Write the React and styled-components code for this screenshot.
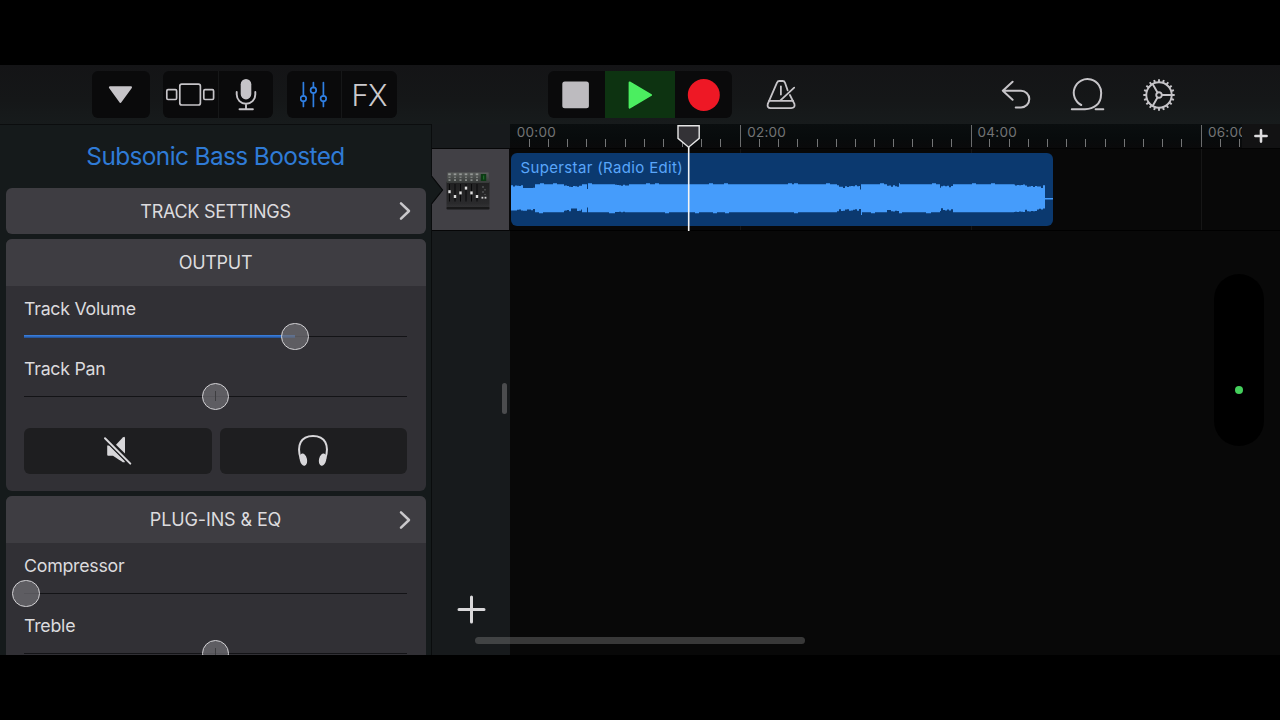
import styled, { createGlobalStyle } from 'styled-components';

const GlobalStyle = createGlobalStyle`
  * { box-sizing: border-box; }
  body {
    margin: 0;
    background: #000;
    font-family: Inter, "Liberation Sans", sans-serif;
    color: #dcdbde;
    overflow: hidden;
  }
  svg { display: block; }
`;

const Screen = styled.div`
  position: relative;
  width: 1280px;
  height: 720px;
  padding: 65px 0;
  display: flex;
  flex-direction: column;
  background: #000;
`;

/* ---------- toolbar ---------- */

const Toolbar = styled.header`
  flex: none;
  height: 59px;
  padding: 6.4px 0 0 92px;
  display: flex;
  align-items: flex-start;
  background: linear-gradient(#141416, #151718 60%, #171b1c);
`;
const Group = styled.div`
  flex: none;
  display: flex;
  height: 47px;
  margin-left: ${(p) => p.$gap || 0}px;
  border-radius: 6px;
  overflow: hidden;
  background: ${(p) => (p.$plain ? 'transparent' : '#0a0a0b')};
`;
const ToolButton = styled.div`
  width: ${(p) => p.$w}px;
  height: 47px;
  display: flex;
  align-items: center;
  justify-content: center;
  background: ${(p) => (p.$active ? '#0d3311' : 'transparent')};
  border-left: ${(p) => (p.$divider ? '1px solid #161718' : 'none')};
`;
const FxLabel = styled.span`
  font-size: 29.5px;
  font-weight: 300;
  letter-spacing: -1px;
  padding-right: 1px;
  color: #cbc9cd;
`;

/* ---------- body ---------- */

const Body = styled.main`
  flex: 1;
  min-height: 0;
  display: flex;
`;
const SidePanel = styled.aside`
  flex: none;
  width: 432px;
  padding: 0 5.5px 0 5.5px;
  border-top: 1px solid #0b0d0e;
  border-right: 1px solid #0a0c0d;
  background: #151a1b;
  overflow: hidden;
`;
const PresetName = styled.h1`
  margin: 0;
  height: 62.5px;
  line-height: 62px;
  text-align: center;
  font-size: 24.4px;
  font-weight: 400;
  letter-spacing: -0.6px;
  color: #2f7bd6;
`;
const Card = styled.section`
  height: ${(p) => p.$h}px;
  margin-bottom: 5px;
  border-radius: 6px;
  overflow: hidden;
  background: #313035;
`;
const CardHeader = styled.div`
  height: 47px;
  display: grid;
  grid-template-columns: 40px 1fr 40px;
  align-items: center;
  justify-items: center;
  background: #3e3d42;
  font-size: 18px;
  letter-spacing: ${(p) => p.$ls || '-0.28px'};
`;
const ChevronBox = styled.span`
  padding-left: 0;
  margin-left: -1px;
`;
const CardBody = styled.div`
  padding: 8.5px 18.5px 0;
`;
const Param = styled.div`
  height: 60px;
`;
const ParamLabel = styled.div`
  height: 28px;
  line-height: 28px;
  font-size: 17.8px;
  letter-spacing: -0.26px;
  white-space: nowrap;
`;
const Rail = styled.div`
  position: relative;
  height: 27px;
  display: flex;
  align-items: center;
`;
const RailLine = styled.div`
  width: 100%;
  height: 1px;
  background: #131316;
`;
const RailFill = styled.div`
  position: absolute;
  left: 0;
  top: 12px;
  height: 3px;
  background: linear-gradient(#3f84e2, #2a64b8 60%, #234a86);
`;
const Knob = styled.div`
  position: absolute;
  top: 0;
  width: 27.5px;
  height: 27.5px;
  margin-left: -13.75px;
  border-radius: 50%;
  border: 1.5px solid #d3d2d5;
  background: rgba(112, 111, 117, 0.72);
  display: flex;
  align-items: center;
  justify-content: center;
`;
const Detent = styled.div`
  width: 1px;
  height: 10px;
  background: #3d3d40;
`;
const ButtonRow = styled.div`
  display: flex;
  gap: 8px;
  padding-top: 13px;
`;
const PadButton = styled.div`
  flex: 1;
  height: 46px;
  border-radius: 6px;
  background: #1e1e20;
  display: flex;
  align-items: center;
  justify-content: center;
`;

const TrackColumn = styled.div`
  flex: none;
  width: 78px;
  display: flex;
  flex-direction: column;
  background: #171a1c;
`;
const ColumnTop = styled.div`
  height: 24px;
`;
const TrackHeader = styled.div`
  position: relative;
  height: 83px;
  border-top: 1px solid #060607;
  border-bottom: 1px solid #060607;
  border-right: 1px solid #0a0a0b;
  background: #414045;
  padding: 23px 0 0 14px;
`;
const Pointer = styled.svg`
  position: absolute;
  left: -1px;
  top: 26px;
`;
const Grip = styled.div`
  align-self: flex-end;
  width: 5px;
  height: 31px;
  margin: 152px 3px 0 0;
  border-radius: 2.5px;
  background: #4b4c4e;
`;
const AddTrack = styled.div`
  margin: 181px 0 0 24.5px;
`;

const Timeline = styled.div`
  position: relative;
  flex: 1;
  min-width: 0;
  display: flex;
  flex-direction: column;
  background: #080808;
`;
const RulerRow = styled.div`
  display: flex;
  height: 24px;
`;
const Ruler = styled.div`
  flex: 1;
  min-width: 0;
  display: flex;
  overflow: hidden;
  background: linear-gradient(#0a0e0f, #080b0c 60%, #0a0a0b);
`;
const RulerCell = styled.div`
  flex: none;
  width: 230.4px;
  padding-top: 1px;
  display: flex;
  flex-direction: column;
`;
const RulerMark = styled.div`
  height: 22px;
  border-left: 1.5px solid ${(p) => (p.$first ? 'transparent' : '#6b6c6d')};
`;
const RulerLabel = styled.div`
  height: 14px;
  padding-left: 5.8px;
  line-height: 14px;
  font-size: 13.5px;
  letter-spacing: 0.25px;
  color: #737475;
`;
const Ticks = styled.div`
  height: 8px;
  display: flex;
  margin-left: -0.6px;
`;
const Tick = styled.div`
  flex: none;
  width: 19.2px;
  border-right: 1px solid #747576;
`;
const AddSection = styled.div`
  width: 38px;
  display: flex;
  align-items: center;
  justify-content: center;
  background: #121213;
`;
const Lane = styled.div`
  height: 83px;
  padding: 4px 0 0 1px;
  border-top: 1px solid #030303;
  border-bottom: 1px solid #000;
  background:
    linear-gradient(#161616, #161616) 230px 0 / 1px 100% no-repeat,
    linear-gradient(#161616, #161616) 461px 0 / 1px 100% no-repeat,
    linear-gradient(#161616, #161616) 691px 0 / 1px 100% no-repeat,
    #080808;
`;
const Region = styled.div`
  width: 542px;
  height: 73px;
  border-radius: 6px;
  overflow: hidden;
  background: #0b396f;
`;
const RegionName = styled.div`
  height: 30px;
  line-height: 29px;
  padding-left: 9.5px;
  font-size: 15px;
  letter-spacing: 0.35px;
  color: #59a6fb;
  white-space: nowrap;
`;
const Playhead = styled.svg`
  position: absolute;
  left: 166px;
  top: 0;
`;
const Island = styled.div`
  position: absolute;
  left: 1214px;
  top: 274px;
  width: 50px;
  height: 172px;
  border-radius: 25px;
  background: #000;
  padding: 112px 0 0 21px;
`;
const MicDot = styled.div`
  width: 8px;
  height: 8px;
  border-radius: 50%;
  background: #44cf5c;
`;
const HomeBar = styled.div`
  position: absolute;
  left: 475px;
  top: 637px;
  width: 330px;
  height: 7px;
  border-radius: 4px;
  background: rgba(130, 130, 130, 0.4);
`;

const INK = '#c6c4c8';

const Icon = ({ box, children, stroke = INK, sw = 2 }) => {
  const [x, y, w, h] = box;
  return (
    <svg
      width={w}
      height={h}
      viewBox={`${x} ${y} ${w} ${h}`}
      fill="none"
      stroke={stroke}
      strokeWidth={sw}
      strokeLinecap="round"
      strokeLinejoin="round"
    >
      {children}
    </svg>
  );
};

const Chevron = () => (
  <ChevronBox>
    <Icon box={[-6, -10, 12, 20]} stroke="#c9c8cb" sw={2.5}>
      <path d="M-4 -7.7L4 0L-4 7.7" />
    </Icon>
  </ChevronBox>
);

const GearIcon = () => {
  const teeth = Array.from({ length: 20 }, (_, i) => (i * 18 * Math.PI) / 180);
  const spokes = [0, 120, 240].map((d) => (d * Math.PI) / 180);
  return (
    <Icon box={[-17, -17, 34, 34]} sw={1.9}>
      <circle r="12.7" />
      <circle r="2.8" />
      {spokes.map((a) => (
        <path key={a} d={`M${3 * Math.cos(a)} ${3 * Math.sin(a)}L${12.5 * Math.cos(a)} ${12.5 * Math.sin(a)}`} />
      ))}
      {teeth.map((a) => (
        <path
          key={a}
          strokeLinecap="butt"
          d={`M${13 * Math.cos(a)} ${13 * Math.sin(a)}L${15.7 * Math.cos(a)} ${15.7 * Math.sin(a)}`}
        />
      ))}
    </Icon>
  );
};

const MixerArt = () => (
  <svg width="44" height="38" viewBox="0 0 44 38">
    <defs>
      <linearGradient id="mixTop" x1="0" y1="0" x2="0" y2="1">
        <stop offset="0" stopColor="#5c5f5d" />
        <stop offset="1" stopColor="#373a39" />
      </linearGradient>
      <linearGradient id="mixBase" x1="0" y1="0" x2="0" y2="1">
        <stop offset="0" stopColor="#202021" />
        <stop offset="0.8" stopColor="#2a2a2c" />
        <stop offset="1" stopColor="#363638" />
      </linearGradient>
    </defs>
    <rect x="0.5" y="9" width="43" height="28" rx="1.5" fill="url(#mixBase)" />
    <rect x="0.5" y="35" width="43" height="2.4" rx="1" fill="#19191a" />
    <path d="M1.5 0.5H42.5L43.5 11H0.5Z" fill="url(#mixTop)" />
    <rect x="34.8" y="2" width="5.4" height="7" fill="#0c3b14" />
    <rect x="37" y="3.5" width="1.2" height="4" fill="#1f6a2a" />
    {[3.5, 9, 14.5, 20, 25.5, 31].map((x, i) => (
      <g key={x}>
        <rect x={x - 1.3} y="1.4" width="2.6" height="1.8" fill="#969997" />
        <rect x={x - 1} y="4.6" width="2" height="1.4" fill="#7d807e" />
        <rect x={x - 1} y="7.4" width="2" height="1.4" fill="#959896" />
        <rect x={x - 0.5} y="12" width="1" height="17.5" fill="#09090a" />
        <rect x={x - 1.2} y={[18.2, 23, 19.4, 14.6, 19.4, 23][i]} width="2.4" height="3" fill="#dedede" />
      </g>
    ))}
    <path d="M37 14v2M39 17v1.5M37 19v2M39 22v1" stroke="#66686a" strokeWidth="1" />
    <rect x="35.5" y="24.8" width="1.8" height="1.8" fill="#d0d0d0" />
    <rect x="38.6" y="24.8" width="1.8" height="1.8" fill="#d0d0d0" />
  </svg>
);

/* quieter passages, where the envelope pulls in from the top and bottom */
const DIPS = [
  { from: 0, to: 24, top: 4, bottom: 3.4 },
  { from: 53, to: 71, top: 3.2, bottom: 4 },
  { from: 76, to: 77, top: 5, bottom: 5 },
  { from: 104, to: 118, top: 2, bottom: 0.8 },
  { from: 326, to: 350, top: 4, bottom: 3.6 },
  { from: 376, to: 388, top: 3, bottom: 3 },
  { from: 429, to: 442, top: 4, bottom: 4.4 },
  { from: 503, to: 514, top: 1.4, bottom: 1.2 },
  { from: 514, to: 526, top: 3, bottom: 3 },
  { from: 526, to: 534, top: 4, bottom: 4.4 },
];

const buildWave = () => {
  let seed = 11;
  const rnd = () => {
    seed = (seed * 16807) % 2147483647;
    return seed / 2147483647;
  };
  const top = [];
  const bottom = [];
  let bumpT = 0;
  let bumpB = 0;
  let r1 = 0;
  let r2 = 0;
  for (let x = 0; x < 534; x += 1) {
    if (x % 2 === 0) {
      r1 = rnd();
      r2 = rnd();
    }
    if (rnd() > 0.965) bumpT = 4;
    if (rnd() > 0.965) bumpB = 4;
    let t = 31.3 - (bumpT-- > 0 ? 1 : 0);
    let b = 59.2 + (bumpB-- > 0 ? 1 : 0);
    DIPS.forEach((d) => {
      if (x >= d.from && x < d.to) {
        const narrow = d.to - d.from < 3;
        t = 31 + d.top * (narrow ? 1 : 0.3 + 0.7 * r1);
        b = 59.5 - d.bottom * (narrow ? 1 : 0.3 + 0.7 * r2);
      }
    });
    if (x === 349) t = 36.5;
    if (x === 350) b = 62;
    top.push(`L${x} ${t.toFixed(1)}L${x + 1} ${t.toFixed(1)}`);
    bottom.unshift(`L${x + 1} ${b.toFixed(1)}L${x} ${b.toFixed(1)}`);
  }
  return `M0 45${top.join('')}L534 45H543V46.4H534${bottom.join('')}Z`;
};
const WAVE = buildWave();

const SliderParam = ({ label, value, fill, detent }) => (
  <Param>
    <ParamLabel>{label}</ParamLabel>
    <Rail>
      <RailLine />
      {fill && <RailFill style={{ width: `${value}%` }} />}
      <Knob style={{ left: `${value}%` }}>{detent && <Detent />}</Knob>
    </Rail>
  </Param>
);

export default function App() {
  return (
    <Screen>
      <GlobalStyle />
      <Toolbar>
        <Group>
          <ToolButton $w={57.5}>
            <Icon box={[108, 83, 25.5, 24]}>
              <path d="M109.9 87.3H131L120.4 102Z" fill={INK} />
            </Icon>
          </ToolButton>
        </Group>
        <Group $gap={13.5}>
          <ToolButton $w={54.5}>
            <Icon box={[165, 83, 50.6, 24]} sw={1.7}>
              <rect x="166.8" y="89.7" width="9.8" height="9.8" rx="1.2" />
              <rect x="179.8" y="84.2" width="20.6" height="20.8" rx="2" />
              <rect x="203.8" y="89.7" width="9.8" height="9.8" rx="1.2" />
            </Icon>
          </ToolButton>
          <ToolButton $w={55.5} $divider>
            <Icon box={[235.5, 76, 22, 38]} sw={1.9}>
              <rect x="241.2" y="79" width="10.6" height="20.4" rx="5.3" fill={INK} stroke="none" />
              <path d="M237.2 92V94.5A9.3 9.3 0 0 0 255.8 94.5V92M246.5 104V109M240 109.2H253.4" />
            </Icon>
          </ToolButton>
        </Group>
        <Group $gap={14}>
          <ToolButton $w={54}>
            <Icon box={[300.4, 81, 28, 28]} sw={1.7} stroke="#2f7fe2">
              <path d="M303.8 82.5V95.8M303.8 101.4V106.5M313.8 82.5V87.4M313.8 93V106.5M323.8 82.5V95.8M323.8 101.4V106.5" />
              <circle cx="303.8" cy="98.6" r="2.8" />
              <circle cx="313.8" cy="90.2" r="2.8" />
              <circle cx="323.8" cy="98.6" r="2.8" />
            </Icon>
          </ToolButton>
          <ToolButton $w={56} $divider>
            <FxLabel>FX</FxLabel>
          </ToolButton>
        </Group>
        <Group $gap={151}>
          <ToolButton $w={57}>
            <Icon box={[561, 80, 30, 30]}>
              <rect x="561.3" y="81.4" width="26.6" height="26.8" rx="2.5" fill="#bdbbbf" stroke="none" />
            </Icon>
          </ToolButton>
          <ToolButton $w={70} $active>
            <Icon box={[625, 80, 30, 30]} stroke="#4bee60">
              <path d="M629.6 82.4L651.1 95L629.6 107.6Z" fill="#4bee60" />
            </Icon>
          </ToolButton>
          <ToolButton $w={57}>
            <Icon box={[687, 78, 34, 34]}>
              <circle cx="703.8" cy="95" r="16" fill="#ee1825" stroke="none" />
            </Icon>
          </ToolButton>
        </Group>
        <Group $gap={32} $plain>
          <ToolButton $w={34}>
            <Icon box={[764.4, 78, 34, 34]} sw={1.8}>
              <path d="M788 90.3L785.4 82.7Q784.8 81 783 81H779.8Q778 81 777.4 82.7L768.2 103.8Q767.2 108 771 108.2H791.5Q795.8 108 794.8 103.8L790.3 95" />
              <path d="M769.5 100.9H793.5M794.6 87.6L780.6 100.6M781.3 86.3V94.5" />
            </Icon>
          </ToolButton>
        </Group>
        <Group $gap={201} $plain>
          <ToolButton $w={34}>
            <Icon box={[999, 78, 34, 34]}>
              <path d="M1012.6 81.7L1002.8 90.8L1012.6 99.8M1002.8 90.8H1021A8.2 8.2 0 0 1 1021 107.4H1015.7" />
            </Icon>
          </ToolButton>
        </Group>
        <Group $gap={36} $plain>
          <ToolButton $w={36}>
            <Icon box={[1069, 77.4, 36, 34]}>
              <path d="M1081.2 104.4A13.7 13.7 0 1 1 1101 94.3C1101 103 1094 108.6 1085 108.6H1071.8M1095.6 108.6H1103.3" />
            </Icon>
          </ToolButton>
        </Group>
        <Group $gap={37} $plain>
          <ToolButton $w={34}>
            <GearIcon />
          </ToolButton>
        </Group>
      </Toolbar>

      <Body>
        <SidePanel>
          <PresetName>Subsonic Bass Boosted</PresetName>
          <Card $h={46.5}>
            <CardHeader>
              <span />
              <span>TRACK SETTINGS</span>
              <Chevron />
            </CardHeader>
          </Card>
          <Card $h={252}>
            <CardHeader>
              <span />
              <span>OUTPUT</span>
            </CardHeader>
            <CardBody>
              <SliderParam label="Track Volume" value={70.7} fill />
              <SliderParam label="Track Pan" value={50} detent />
              <ButtonRow>
                <PadButton>
                  <Icon box={[103, 436, 30, 30]} stroke="none">
                    <path d="M107.2 445.5H109.5L112.5 448.5L124.8 460.8L124.8 462.2H122.8Q120 460.5 113 455.8H108.2Q107.2 455.8 107.2 454.8Z" fill="#d8d7da" />
                    <path d="M116 444.8L122.8 437.6Q125 435.7 125 438.4V453.6Z" fill="#d8d7da" />
                    <path d="M105 438.3L130.3 463.6" stroke="#1e1e20" strokeWidth="4.4" />
                    <path d="M105 438.3L130.3 463.6" stroke="#d8d7da" strokeWidth="2" />
                  </Icon>
                </PadButton>
                <PadButton>
                  <Icon box={[297, 434, 32, 34]} stroke="#d8d7da">
                    <path d="M300.8 459C296.2 445 301 435.9 313 435.9C325 435.9 329.8 445 325.2 459" />
                    <ellipse cx="303.4" cy="459.6" rx="3.6" ry="6.2" transform="rotate(-13 303.4 459.6)" fill="#d8d7da" stroke="none" />
                    <ellipse cx="322.6" cy="459.6" rx="3.6" ry="6.2" transform="rotate(13 322.6 459.6)" fill="#d8d7da" stroke="none" />
                  </Icon>
                </PadButton>
              </ButtonRow>
            </CardBody>
          </Card>
          <Card $h={252}>
            <CardHeader $ls="-0.12px">
              <span />
              <span>PLUG-INS &amp; EQ</span>
              <Chevron />
            </CardHeader>
            <CardBody>
              <SliderParam label="Compressor" value={0.5} />
              <SliderParam label="Treble" value={50} detent />
            </CardBody>
          </Card>
        </SidePanel>

        <TrackColumn>
          <ColumnTop />
          <TrackHeader>
            <Pointer width="13" height="30" viewBox="0 0 13 30">
              <path d="M0 0L12 15L0 30Z" fill="#151a1b" />
              <path d="M0.5 1L11.5 15L0.5 29" fill="none" stroke="#08090a" strokeWidth="1.2" />
            </Pointer>
            <MixerArt />
          </TrackHeader>
          <Grip />
          <AddTrack>
            <Icon box={[0, 0, 29, 29]} stroke="#d9d8da" sw={3}>
              <path d="M2 14.5H27M14.5 2V27" />
            </Icon>
          </AddTrack>
        </TrackColumn>

        <Timeline>
          <RulerRow>
            <Ruler>
              {['00:00', '02:00', '04:00', '06:00'].map((t, i) => (
                <RulerCell key={t}>
                  <RulerMark $first={i === 0}>
                    <RulerLabel>{t}</RulerLabel>
                    <Ticks>
                      {Array.from({ length: 11 }, (_, n) => (
                        <Tick key={n} />
                      ))}
                    </Ticks>
                  </RulerMark>
                </RulerCell>
              ))}
            </Ruler>
            <AddSection>
              <Icon box={[0, 0, 14, 14]} stroke="#dddcde" sw={2.6}>
                <path d="M1.4 7H12.6M7 1.4V12.6" />
              </Icon>
            </AddSection>
          </RulerRow>
          <Lane>
            <Region>
              <RegionName>Superstar (Radio Edit)</RegionName>
              <svg width="543" height="43" viewBox="0 30 543 43">
                <path d={WAVE} fill="#459cfb" />
              </svg>
            </Region>
          </Lane>
          <Playhead width="25" height="107" viewBox="676 124 25 107">
            <path d="M688.7 146V231" stroke="#f4f4f4" strokeWidth="1.6" />
            <path d="M678 125.7H699.2V138.3L688.6 147.2L678 138.3Z" fill="#333236" stroke="#e6e6e6" strokeWidth="1.4" />
          </Playhead>
        </Timeline>
      </Body>

      <Island>
        <MicDot />
      </Island>
      <HomeBar />
    </Screen>
  );
}
